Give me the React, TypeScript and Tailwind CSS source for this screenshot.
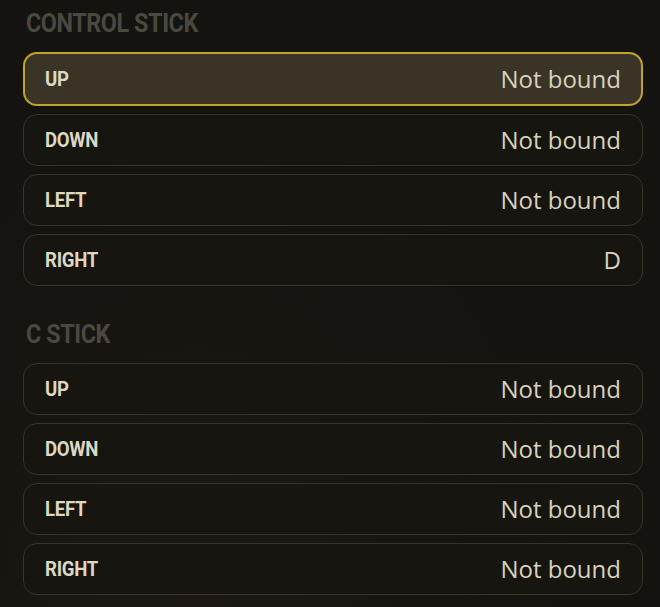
const controlStick = [
  { label: 'UP', value: 'Not bound', active: true },
  { label: 'DOWN', value: 'Not bound' },
  { label: 'LEFT', value: 'Not bound' },
  { label: 'RIGHT', value: 'D' },
]

const cStick = [
  { label: 'UP', value: 'Not bound' },
  { label: 'DOWN', value: 'Not bound' },
  { label: 'LEFT', value: 'Not bound' },
  { label: 'RIGHT', value: 'Not bound' },
]

type Binding = { label: string; value: string; active?: boolean }

function BindingRow({ label, value, active }: Binding) {
  return (
    <div
      className={
        active
          ? 'flex h-[54px] items-center justify-between rounded-[14px] border-2 border-[#c2a22a] bg-[#3a3427] pl-[20px] pr-[20px]'
          : 'flex h-[52px] items-center justify-between rounded-[14px] border border-[#38342a] bg-[#16150f] pl-[21px] pr-[21px]'
      }
    >
      <span className="inline-block origin-left scale-x-[0.93] font-['Roboto',sans-serif] text-[20px] font-bold tracking-[-0.3px] text-[#dcd8c4]">
        {label}
      </span>
      <span className="font-['Open_Sans',sans-serif] text-[24px] text-[#d6d2be]">{value}</span>
    </div>
  )
}

function Section({ title, rows }: { title: string; rows: Binding[] }) {
  return (
    <div>
      <div className="h-[52px] pl-[3px] pt-[4px]">
        <h2 className="inline-block origin-left scale-x-[0.9] font-['Roboto',sans-serif] text-[26px] font-bold tracking-[-0.5px] whitespace-nowrap text-[#4a4840]">
          {title}
        </h2>
      </div>
      <div className="flex flex-col gap-[8px]">
        {rows.map((r) => (
          <BindingRow key={r.label} {...r} />
        ))}
      </div>
    </div>
  )
}

export default function App() {
  return (
    <div className="h-[607px] w-[660px] overflow-hidden bg-[#14130f] bg-[radial-gradient(ellipse_at_30%_100%,#1d1813_0%,#14130f_60%)] pl-[23px] pr-[17px]">
      <div className="flex flex-col gap-[25px]">
        <Section title="CONTROL STICK" rows={controlStick} />
        <Section title="C STICK" rows={cStick} />
      </div>
    </div>
  )
}
